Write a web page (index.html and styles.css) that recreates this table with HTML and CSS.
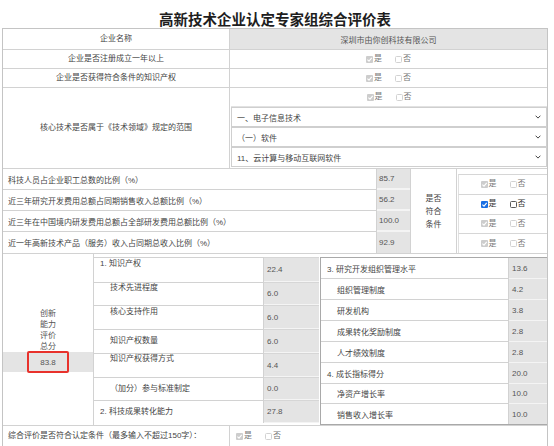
FILE: index.html
```html
<!DOCTYPE html>
<html lang="zh-CN">
<head>
<meta charset="utf-8">
<link rel="stylesheet" href="styles.css">
</head>
<body>
<div class="page">
  <h1 class="title">高新技术企业认定专家组综合评价表</h1>
  <div class="sheet">
    <div class="arow h21">
      <div class="lbl">企业名称</div>
      <div class="val gray">深圳市由你创科技有限公司</div>
    </div>
    <div class="arow h19">
      <div class="lbl">企业是否注册成立一年以上</div>
      <div class="val">
        <span class="opts">
          <span class="opt"><svg class="box" viewBox="0 0 7 7"><rect width="7" height="7" rx="1" fill="#cdcdcd"/><path d="M1.4 3.6 3 5.1 5.7 1.9" fill="none" stroke="#fff" stroke-width="1.1"/></svg><span class="dim">是</span></span>
          <span class="opt"><svg class="box" viewBox="0 0 7 7"><rect x=".5" y=".5" width="6" height="6" rx="1" fill="#fff" stroke="#d2d2d2"/></svg><span class="dim">否</span></span>
        </span>
      </div>
    </div>
    <div class="arow h19">
      <div class="lbl">企业是否获得符合条件的知识产权</div>
      <div class="val">
        <span class="opts">
          <span class="opt"><svg class="box" viewBox="0 0 7 7"><rect width="7" height="7" rx="1" fill="#cdcdcd"/><path d="M1.4 3.6 3 5.1 5.7 1.9" fill="none" stroke="#fff" stroke-width="1.1"/></svg><span class="dim">是</span></span>
          <span class="opt"><svg class="box" viewBox="0 0 7 7"><rect x=".5" y=".5" width="6" height="6" rx="1" fill="#fff" stroke="#d2d2d2"/></svg><span class="dim">否</span></span>
        </span>
      </div>
    </div>
    <div class="arow h81">
      <div class="lbl">核心技术是否属于《技术领域》规定的范围</div>
      <div class="val stack">
        <div class="chkline">
          <span class="opts">
            <span class="opt"><svg class="box" viewBox="0 0 7 7"><rect width="7" height="7" rx="1" fill="#cdcdcd"/><path d="M1.4 3.6 3 5.1 5.7 1.9" fill="none" stroke="#fff" stroke-width="1.1"/></svg><span class="dim">是</span></span>
            <span class="opt"><svg class="box" viewBox="0 0 7 7"><rect x=".5" y=".5" width="6" height="6" rx="1" fill="#fff" stroke="#d2d2d2"/></svg><span class="dim">否</span></span>
          </span>
        </div>
        <div class="sel"><span>一、电子信息技术</span><svg class="chev" viewBox="0 0 6 4"><path d="M.6.7 3 3.1 5.4.7" fill="none" stroke="#444" stroke-width="1"/></svg></div>
        <div class="sel"><span>（一）软件</span><svg class="chev" viewBox="0 0 6 4"><path d="M.6.7 3 3.1 5.4.7" fill="none" stroke="#444" stroke-width="1"/></svg></div>
        <div class="sel"><span>11、云计算与移动互联网软件</span><svg class="chev" viewBox="0 0 6 4"><path d="M.6.7 3 3.1 5.4.7" fill="none" stroke="#444" stroke-width="1"/></svg></div>
      </div>
    </div>

    <div class="secb">
      <div class="btext r1">科技人员占企业职工总数的比例（%）</div>
      <div class="bnum r1">85.7</div>
      <div class="btext r2">近三年研究开发费用总额占同期销售收入总额比例（%）</div>
      <div class="bnum r2">56.2</div>
      <div class="btext r3">近三年在中国境内研发费用总额占全部研发费用总额比例（%）</div>
      <div class="bnum r3">100.0</div>
      <div class="btext r4">近一年高新技术产品（服务）收入占同期总收入比例（%）</div>
      <div class="bnum r4">92.9</div>
      <div class="bcrit">是否<br>符合<br>条件</div>
      <div class="bchecks">
        <div class="bcrow">
          <span class="opts">
            <span class="opt"><svg class="box" viewBox="0 0 7 7"><rect width="7" height="7" rx="1" fill="#cdcdcd"/><path d="M1.4 3.6 3 5.1 5.7 1.9" fill="none" stroke="#fff" stroke-width="1.1"/></svg><span class="dim">是</span></span>
            <span class="opt"><svg class="box" viewBox="0 0 7 7"><rect x=".5" y=".5" width="6" height="6" rx="1" fill="#fff" stroke="#d2d2d2"/></svg><span class="dim">否</span></span>
          </span>
        </div>
        <div class="bcrow">
          <span class="opts">
            <span class="opt"><svg class="box" viewBox="0 0 7 7"><rect width="7" height="7" rx="1" fill="#1a6fe3"/><path d="M1.4 3.6 3 5.1 5.7 1.9" fill="none" stroke="#fff" stroke-width="1.1"/></svg><span class="dark">是</span></span>
            <span class="opt"><svg class="box" viewBox="0 0 7 7"><rect x=".5" y=".5" width="6" height="6" rx="1" fill="#fff" stroke="#5a5a5a"/></svg><span class="dark">否</span></span>
          </span>
        </div>
        <div class="bcrow">
          <span class="opts">
            <span class="opt"><svg class="box" viewBox="0 0 7 7"><rect width="7" height="7" rx="1" fill="#cdcdcd"/><path d="M1.4 3.6 3 5.1 5.7 1.9" fill="none" stroke="#fff" stroke-width="1.1"/></svg><span class="dim">是</span></span>
            <span class="opt"><svg class="box" viewBox="0 0 7 7"><rect x=".5" y=".5" width="6" height="6" rx="1" fill="#fff" stroke="#d2d2d2"/></svg><span class="dim">否</span></span>
          </span>
        </div>
        <div class="bcrow">
          <span class="opts">
            <span class="opt"><svg class="box" viewBox="0 0 7 7"><rect width="7" height="7" rx="1" fill="#cdcdcd"/><path d="M1.4 3.6 3 5.1 5.7 1.9" fill="none" stroke="#fff" stroke-width="1.1"/></svg><span class="dim">是</span></span>
            <span class="opt"><svg class="box" viewBox="0 0 7 7"><rect x=".5" y=".5" width="6" height="6" rx="1" fill="#fff" stroke="#d2d2d2"/></svg><span class="dim">否</span></span>
          </span>
        </div>
      </div>
    </div>

    <div class="secc">
      <div class="cleft">
        <div class="ctitle">创新<br>能力<br>评价<br>总分</div>
        <div class="cband"><span class="score">83.8</span></div>
      </div>
      <div class="cmid">
        <div class="mtext h25 p1">1. 知识产权</div><div class="mnum">22.4</div>
        <div class="mtext h23 p0 sub">技术先进程度</div><div class="mnum">6.0</div>
        <div class="mtext h24 p1 sub">核心支持作用</div><div class="mnum">6.0</div>
        <div class="mtext h24 p6 sub">知识产权数量</div><div class="mnum">6.0</div>
        <div class="mtext h24 p0 sub">知识产权获得方式</div><div class="mnum">4.4</div>
        <div class="mtext h23 p6 sub">（加分）参与标准制定</div><div class="mnum">0.0</div>
        <div class="mtext h23 p6">2. 科技成果转化能力</div><div class="mnum">27.8</div>
      </div>
      <div class="cright">
        <div class="rtext">3. 研究开发组织管理水平</div><div class="rnum">13.6</div>
        <div class="rtext sub">组织管理制度</div><div class="rnum">4.2</div>
        <div class="rtext sub">研发机构</div><div class="rnum">3.8</div>
        <div class="rtext sub">成果转化奖励制度</div><div class="rnum">2.8</div>
        <div class="rtext sub">人才绩效制度</div><div class="rnum">2.8</div>
        <div class="rtext">4. 成长指标得分</div><div class="rnum">20.0</div>
        <div class="rtext sub">净资产增长率</div><div class="rnum">10.0</div>
        <div class="rtext sub">销售收入增长率</div><div class="rnum">10.0</div>
      </div>
    </div>

    <div class="arow final">
      <div class="lbl left">综合评价是否符合认定条件（最多输入不超过150字）：</div>
      <div class="val start">
        <span class="opts">
          <span class="opt"><svg class="box" viewBox="0 0 7 7"><rect width="7" height="7" rx="1" fill="#cdcdcd"/><path d="M1.4 3.6 3 5.1 5.7 1.9" fill="none" stroke="#fff" stroke-width="1.1"/></svg><span class="dim">是</span></span>
          <span class="opt"><svg class="box" viewBox="0 0 7 7"><rect x=".5" y=".5" width="6" height="6" rx="1" fill="#fff" stroke="#d2d2d2"/></svg><span class="dim">否</span></span>
        </span>
      </div>
    </div>
  </div>
</div>
</body>
</html>
```

FILE: styles.css
```css
* { box-sizing: border-box; }

body {
  margin: 0;
  background: #fff;
  font-family: "Liberation Sans", "Noto Sans CJK SC", sans-serif;
  font-size: 8px;
  color: #444;
}

.page {
  padding: 0 6px 0 2px;
}

.title {
  margin: 0;
  height: 28px;
  padding-top: 10px;
  font-family: "Noto Sans CJK SC", sans-serif;
  font-size: 14.5px;
  line-height: 18px;
  font-weight: 700;
  color: #1e1e1e;
  text-align: center;
}

.sheet {
  border: 1px solid #c4c4c4;
}

/* ---------- section A ---------- */
.arow {
  display: grid;
  grid-template-columns: 227px 1fr;
  border-bottom: 1px solid #d2d2d2;
}
.h21 { height: 21px; }
.h19 { height: 19px; }
.h81 { height: 81px; }

.lbl {
  border-right: 1px solid #d2d2d2;
  display: flex;
  align-items: center;
  justify-content: center;
  line-height: 10px;
}
.lbl.left { justify-content: flex-start; padding-left: 5px; }

.val {
  display: flex;
  align-items: center;
  justify-content: center;
}
.val.gray { background: #e4e4e4; color: #555; }
.val.start { justify-content: flex-start; padding-left: 6px; }

.val.stack {
  flex-direction: column;
  align-items: stretch;
  justify-content: flex-start;
  padding: 0 0 0 1px;
}
.chkline {
  height: 19px;
  display: flex;
  align-items: center;
  justify-content: center;
  border-bottom: 1px solid #e2e2e2;
}
.sel {
  height: 20px;
  border: 1px solid #cfcfcf;
  display: flex;
  align-items: center;
  justify-content: space-between;
  padding: 0 5px 0 5px;
  color: #444;
  background: #fff;
}
.chev { width: 6px; height: 4px; }

/* checkboxes */
.opts { display: inline-flex; align-items: center; gap: 13px; line-height: 10px; }
.opt { display: inline-flex; align-items: center; }
.box { width: 7px; height: 7px; margin-right: 1px; display: block; }
.dim { color: #777; }
.dark { color: #333; }

/* ---------- section B ---------- */
.secb {
  display: grid;
  grid-template-columns: 374px 33px 47px 1fr;
  grid-template-rows: repeat(4, 21px);
  border-bottom: 1px solid #d2d2d2;
}
.btext {
  grid-column: 1;
  display: flex;
  align-items: center;
  padding-left: 5px;
  border-right: 1px solid #d2d2d2;
  border-bottom: 1px solid #d2d2d2;
}
.bnum {
  grid-column: 2;
  display: flex;
  align-items: center;
  padding-left: 2px;
  background: #e4e4e4;
  border-bottom: 2px solid #f4f4f4;
  color: #555;
}
.r1 { grid-row: 1; }
.r2 { grid-row: 2; }
.r3 { grid-row: 3; }
.r4 { grid-row: 4; border-bottom: none; }
.bcrit {
  grid-column: 3;
  grid-row: 1 / 5;
  display: flex;
  align-items: center;
  justify-content: center;
  text-align: center;
  line-height: 13px;
  border-left: 1px solid #d2d2d2;
  border-right: 1px solid #d2d2d2;
}
.bchecks {
  grid-column: 4;
  grid-row: 1 / 5;
  display: flex;
  flex-direction: column;
  padding: 5px 0 0 1px;
}
.bcrow {
  flex: 1;
  display: flex;
  align-items: center;
  justify-content: center;
  border-top: 1px solid #d6d6d6;
  border-left: 1px solid #e0e0e0;
}

/* ---------- section C ---------- */
.secc {
  display: grid;
  grid-template-columns: 91px 226px 227px;
  height: 171px;
}
.cleft {
  border-right: 1px solid #d2d2d2;
  display: flex;
  flex-direction: column;
  padding-top: 54px;
}
.ctitle {
  text-align: center;
  line-height: 11px;
  color: #555;
}
.cband {
  height: 20px;
  background: #e4e4e4;
  display: flex;
  align-items: center;
  justify-content: center;
}
.score {
  width: 42px;
  height: 22px;
  border: 2px solid #e8322c;
  border-radius: 2px;
  display: flex;
  align-items: center;
  justify-content: center;
  color: #555;
}

.cmid {
  display: grid;
  grid-template-columns: 170px 55px;
  align-content: start;
  padding-top: 3px;
}
.mtext {
  border-top: 1px solid #d2d2d2;
  border-right: 1px solid #d2d2d2;
  padding-left: 6px;
  line-height: 10px;
}
.mtext.sub { padding-left: 16px; }
.h25 { height: 25px; }
.h23 { height: 23px; }
.h24 { height: 24px; }
.p0 { padding-top: 0; }
.p1 { padding-top: 1px; }
.p6 { padding-top: 6px; }
.mnum {
  background: #e4e4e4;
  border-top: 1px solid #d6d6d6;
  border-bottom: 1px solid #f4f4f4;
  display: flex;
  align-items: center;
  padding-left: 3px;
  color: #555;
}

.cright {
  margin-top: 3px;
  height: 168px;
  border: 1px solid #a9a9a9;
  border-right: none;
  display: grid;
  grid-template-columns: 188px 1fr;
  grid-template-rows: repeat(6, 21px) repeat(2, 20px);
}
.rtext {
  border-bottom: 1px solid #d2d2d2;
  border-right: 1px solid #d2d2d2;
  display: flex;
  align-items: center;
  padding-left: 6px;
}
.rtext.sub { padding-left: 16px; }
.rnum {
  background: #e4e4e4;
  border-bottom: 1px solid #f4f4f4;
  display: flex;
  align-items: center;
  padding-left: 3px;
  color: #555;
}
.rtext:nth-last-child(2), .rnum:last-child { border-bottom: none; }

.arow.final {
  height: 21px;
  border-top: 1px solid #d2d2d2;
  border-bottom: none;
}
```
